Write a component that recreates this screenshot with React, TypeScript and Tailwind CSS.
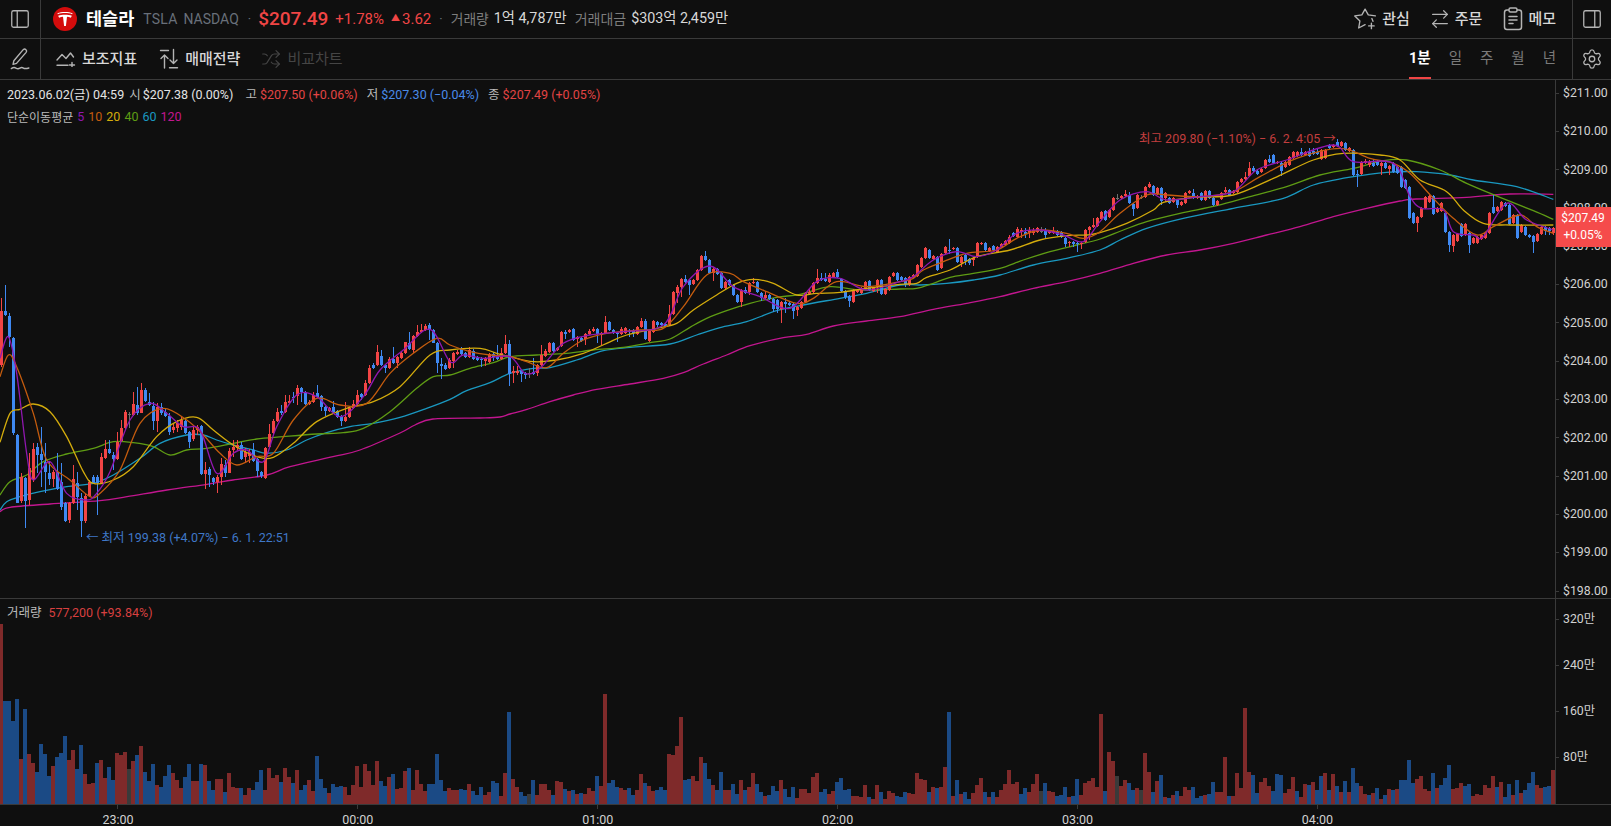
import { ArrowRightLeft, PanelLeft, PanelRight, Settings, Shuffle } from "lucide-react"

// candle rows, read off the chart: colour, body top, body bottom, wick top, wick bottom
const candleRows: [number, number, number, string][] = [
  [0, 280, 0, `r92,255,55,260 b92,104,15,108 b108,170,100,200 b175,460,170,465 b465,668,462,670 r592,663,578,670 b595,663,590,745 r565,660,520,675 r507,600,490,605 b500,525,490,580 b522,540,440,620 b545,577,490,640 b578,597,545,615 r577,597,570,620 b575,627,518,630 b606,682,550,690 b670,722,665,725 r670,720,665,730 r598,670,555,672 b610,652,575,690 b655,722,640,772 r648,722,640,728 r605,648,600,650 b592,610,585,612 b590,610,585,705 r532,610,518,612 r507,535,480,538 b507,520,480,523 b525,537,515,570 r485,537,455,540 r445,482,420,485 r395,445,390,450 g402,404,395,445 r373,405,335,408 b375,400,320,405 r330,398,308,400 b330,362,325,365 b365,375,340,378 b377,423,365,450 r380,423,370,455 b382,400,370,405 b395,408,385,411 b407,455,400,465 r440,450,432,460 r430,445,420,455 r420,440,412,450 b422,460,418,462 b455,485,452,505 r450,478,442,482 r440,450,435,465 b438,582,435,585 r570,582,545,628 b567,585,562,620 b595,607,590,615 r590,607,585,640 r552,590,535,615 b555,578,540,590 r513,578,505,580 r500,510,480,530 r495,505,480,510 b495,538,485,540 r515,530,505,550 r515,527,508,550 b510,542,490,545 b538,572,535,590 b575,587,572,595 r505,595,502,598 r462,502,433,504 r422,460,418,462 r396,422,385,425 b393,400,375,404 r367,395,345,398 r362,370,345,373 b350,354,335,370 r325,348,315,375 b325,335,320,365 b335,372,332,375 r365,372,360,375 r345,365,335,368 b340,350,315,353 b347,380,345,392 b380,392,378,408 r385,392,380,395 b380,395,362,398 b393,410,390,413 b410,423,405,438 r412,423,365,426 r385,412,378,415 r373,385,360,388 r345,373,330,376 b342,350,338,360 r308,345,300,348 r265,310,255,313 b255,265,250,268 r215,255,195,258 b228,255,210,258 b255,265,252,278 r238,265,232,268 b237,250,200,252 r232,250,228,265 r218,235,212,238 r187,218,185,222 b188,207,155,210 r168,210,165,220 r155,168,135,171 r150,157,133,160 r137,150,132,153 b135,150,130,180 b150,188,148,190 b188,250,186,280 b252,258,235,298 b255,268,250,270 r240,265,235,268`],
  [113, 240, 0, `r340,362,335,385 r337,342,330,345 b325,342,322,345 b340,352,336,355 r330,352,320,355 b332,358,328,361 b352,360,348,363 b358,361,350,382 r355,362,350,378 r343,365,340,368 b343,352,335,363 b350,358,315,361 r338,358,325,361 r312,338,285,341 b312,402,300,437 r393,399,378,430 r393,399,378,405 b393,402,390,425 b400,405,397,418 g400,402,385,415 b397,403,355,406 r376,398,372,408 r346,376,315,379 r333,348,328,351 r309,335,305,338 b309,332,306,335 r323,330,320,333 r276,318,272,321 b275,283,270,297 r270,277,266,280 b268,300,265,303 r292,298,288,322 b295,302,292,305 r282,297,278,315 r272,283,268,286 r266,273,262,276 b267,283,265,308 r278,284,275,315 r246,278,228,281 b246,270,243,273 b270,280,267,283 b280,283,277,305 r266,282,262,285 r265,280,262,283 b272,275,268,290 b272,278,268,290 r262,282,258,285 r242,262,235,265 b243,298,238,300 r274,302,270,305 r243,276,240,279 b245,255,242,262 b250,256,245,265 b252,258,248,262 r222,255,195,258 r155,223,152,226 r140,160,136,188 r117,140,113,172 b117,125,105,128 b120,136,117,165 r120,132,117,135 r90,120,87,123 r48,90,45,93 b48,60,33,63 b60,98,57,101 r87,100,84,122 b87,103,84,106 b100,145,97,148 r125,145,122,148 b120,135,117,138 b135,165,132,168 b165,185,162,188 r150,185,147,200 b150,158,140,161 r128,155,125,165 r125,130,115,133 b125,155,122,158 b158,173,155,182 r165,173,152,176 b165,178,162,181 b178,208,175,215 b180,207,177,220 r185,207,182,248 b185,192,175,220 b188,195,185,198 b192,212,189,237 r202,210,199,228 r185,205,182,208 r160,185,157,188 r155,162,148,165 r130,155,127,158 r113,130,88,133 b115,120,98,123 b118,123,98,126 r105,125,100,128 r100,112,97,115 b97,112,87,115 b118,152,115,155 b152,170,149,178 b168,182,165,200 r150,185,147,188 r150,155,147,158 r145,158,142,161 r127,145,124,148 b122,150,119,153 r143,152,140,155 r120,142,117,160 b120,163,117,166 r148,162,145,165 r110,150,107,153 r100,107,97,110 b100,120,97,123`],
  [225, 170, 0, `b320,330,317,333 b323,342,320,352 r320,345,317,348 r315,322,312,325 r285,318,282,321 r265,290,262,293 r233,265,230,268 b240,265,237,268 r257,268,254,271 b262,300,259,303 r252,295,249,298 r232,250,229,253 b240,243,208,252 r233,238,230,241 b233,275,230,278 r260,278,257,290 b255,272,252,285 b267,278,264,285 r265,270,262,288 r220,262,217,265 r220,223,217,226 b220,240,217,243 r235,243,232,246 b228,240,225,243 r232,245,229,250 r222,232,219,235 r212,225,209,228 r200,220,195,223 b190,197,187,200 r178,200,170,203 r180,186,175,205 b185,192,175,205 r180,188,172,203 r180,188,175,195 r175,185,172,188 g183,185,172,190 b182,195,175,207 r183,190,180,193 r183,190,172,193 b185,195,180,198 b187,200,184,203 b205,222,202,230 r215,220,212,230 b215,222,212,230 b218,222,215,245 r218,222,215,238 r180,215,177,218 r172,180,169,210 r165,170,145,173 r145,168,142,171 r125,147,122,150 b123,150,120,153 r120,140,117,143 r83,120,80,123 g85,87,72,90 r78,85,75,88 r72,78,60,81 b75,100,65,103 b102,118,99,137 r75,115,72,118 g80,82,75,88 r50,80,47,83 r42,50,37,53 b48,75,45,78 r55,72,52,75 b55,92,52,105 r70,85,67,95 b85,100,82,103 r85,97,82,100 b90,105,87,115 r97,105,94,108 r70,100,67,103 r62,68,59,71 b70,85,57,88 r78,85,75,88 b70,90,67,93 r62,90,59,93 b62,85,59,88 b85,105,82,108 r92,105,89,108 r68,88,65,91 r60,65,52,68 b60,75,57,78 r62,70,59,73 r35,65,32,68 r28,35,25,38 r20,27,5,30`],
  [312, 120, 0, `r143,168,125,171 b143,153,138,156 b153,163,150,166 r147,157,144,160 r120,145,117,148 b118,125,105,128 b105,130,102,133 r125,130,122,133 b128,152,125,168 r125,140,122,143 r112,135,109,138 r97,115,94,118 r97,107,94,110 b95,105,85,108 r95,105,92,108 b97,107,85,110 b92,103,85,106 b95,103,85,106 r90,118,87,121 r90,115,87,118 b75,85,72,88 r75,80,72,83 b65,78,58,81 r65,77,62,80 b70,90,67,93 r85,92,82,95 b90,165,87,168 b162,165,150,200 r125,162,122,165 r122,130,117,133 r125,135,120,140 b130,138,118,141 b123,135,120,138 r130,137,127,165 b130,145,127,148 r137,148,134,165 b130,155,127,158 b140,160,137,163 b142,200,139,203 b180,205,177,208 b200,295,197,298 b280,308,277,311 r290,310,287,335 r265,290,262,293 r230,265,227,268 r228,245,225,248 b228,283,225,286 r265,275,262,278 r250,272,247,275 b278,335,275,338 b335,375,332,395 r345,378,342,395 r342,362,339,365 b312,348,309,351 r312,345,309,348 b340,375,337,400 r355,370,352,373 r350,370,347,373 r345,357,342,360 r340,355,337,358 r280,340,277,343 b262,278,226,281 r260,272,257,275 r245,270,242,273 b250,258,247,261 b255,313,252,316 r285,310,282,313 b285,355,282,358 r315,335,312,338 b320,345,317,348 b345,350,342,353 b348,365,345,400 r342,362,339,365 r320,342,317,345 b322,332,319,345 b325,333,322,345 r325,340,322,345`],
]

const candleFill: Record<string, string> = { r: "#f24545", b: "#3f89f2", g: "#6f6f6f" }

type Candle = { i: number; c: string; top: number; bot: number; wt: number; wb: number }

const candles: Candle[] = candleRows.flatMap(([start, oy, , text]) =>
  text.split(" ").map((tok, k) => {
    const [a, b, wt, wb] = tok.slice(1).split(",").map(Number)
    return {
      i: start + k,
      c: tok[0],
      top: oy + a / 3,
      bot: oy + b / 3,
      wt: oy + (wt || a - 6) / 3,
      wb: oy + (wb || b + 6) / 3,
    }
  }),
)

const seg = (ox: number, oy: number, text: string, maxX = 9999) =>
  text
    .split(" ")
    .map((p) => p.split(",").map(Number))
    .map(([x, y]) => [ox + x / 3, oy + y / 3])
    .filter(([x]) => x < maxX)

const smooth = (pts: number[][]) => {
  let d = `M${pts[0][0]} ${pts[0][1]}`
  for (let i = 0; i < pts.length - 1; i++) {
    const p0 = pts[Math.max(i - 1, 0)]
    const p1 = pts[i]
    const p2 = pts[i + 1]
    const p3 = pts[Math.min(i + 2, pts.length - 1)]
    const c1x = p1[0] + (p2[0] - p0[0]) / 6
    const c1y = p1[1] + (p2[1] - p0[1]) / 6
    const c2x = p2[0] - (p3[0] - p1[0]) / 6
    const c2y = p2[1] - (p3[1] - p1[1]) / 6
    d += ` C${c1x} ${c1y} ${c2x} ${c2y} ${p2[0]} ${p2[1]}`
  }
  return d
}

const averages = [
  {
    color: "#c2168f",
    pts: [
      [0, 511.7], [10, 507.3], [50, 504], [100, 500.7], [127, 496.7], [167, 490], [207, 484.3], [233, 480], [267, 475], [290, 466.7], [333, 456.7], [360, 450], [400, 433], [415, 425], [433, 419], [480, 418], [500, 417], [510, 414], [527, 409.3],
      ...seg(450, 240, "300,485 370,465 440,448 540,432 640,415 700,398 760,372 830,345 900,317 1000,293 1070,283 1150,258 1250,243 1350,230"),
      ...seg(900, 170, "100,418 200,400 300,380 400,355 500,335", 1100),
      ...seg(1100, 120, "0,460 100,430 200,405 300,390 400,370 500,345 600,320 700,290 800,265 900,243 950,237 1100,232 1230,222 1360,223"),
    ],
  },
  {
    color: "#1a98c0",
    pts: [
      ...seg(0, 280, "0,690 20,665 60,650 120,635 200,620 280,610 340,585 420,535 480,490 560,465 610,465 650,480 700,495 760,510 800,520 860,510 920,480 980,458 1050,440 1120,430 1200,412 1280,385"),
      ...seg(450, 240, "0,478 50,452 120,428 180,400 250,385 300,383 380,360 460,332 540,322 660,312 740,285 810,263 890,245 980,212 1060,195 1170,175 1250,160"),
      ...seg(900, 170, "0,345 60,345 140,340 220,330 300,315 400,285 500,265", 1100),
      ...seg(1100, 120, "0,390 60,360 140,325 250,295 400,265 550,235 640,195 760,170 860,157 950,155 1050,165 1120,180 1250,200 1360,238"),
    ],
  },
  {
    color: "#5f9c14",
    pts: [
      ...seg(0, 280, "0,645 30,605 80,585 130,545 200,522 280,505 340,485 400,488 460,500 510,525 560,510 620,505 700,490 770,477 850,470 950,462 1030,458 1090,445 1170,395 1250,325 1300,290"),
      ...seg(450, 240, "0,405 60,385 130,368 180,350 260,345 350,340 430,330 520,322 600,308 660,297 720,262 770,235 830,212 900,190 980,172 1050,163 1140,140 1230,150"),
      ...seg(900, 170, "0,357 50,355 100,340 150,322 220,310 300,295 370,270 450,245 530,225", 1100),
      ...seg(1100, 120, "0,357 70,330 140,305 240,280 350,257 450,230 560,200 660,165 760,145 850,122 920,120 1020,150 1100,190 1200,232 1300,272 1360,298"),
    ],
  },
  {
    color: "#d4ac0c",
    pts: [
      ...seg(0, 280, "0,487 30,400 60,388 100,372 150,395 200,470 250,575 280,610 340,600 400,560 470,470 530,425 590,412 640,450 700,495 770,530 820,532 880,490 950,425 1040,385 1120,365 1200,320 1290,225"),
      ...seg(450, 240, "0,330 90,325 140,340 180,350 250,365 320,360 400,340 470,310 530,285 620,265 680,250 730,210 800,165 860,130 910,118 970,130 1040,165 1100,160 1170,157 1250,145"),
      ...seg(900, 170, "0,343 50,340 80,322 150,300 230,260 330,240 420,210 500,197 560,195", 1100),
      ...seg(1100, 120, "0,338 80,310 160,270 190,247 280,232 400,225 520,175 640,120 730,100 840,105 900,120 960,180 1040,215 1090,270 1150,310 1230,315 1360,315"),
    ],
  },
  {
    color: "#c45c0e",
    pts: [
      ...seg(0, 280, "0,290 25,225 50,260 100,400 140,540 210,600 270,650 300,640 360,570 420,430 490,385 560,420 610,465 660,520 710,555 770,530 820,520 880,420 950,355 1020,375 1100,370 1170,280 1240,220 1310,175"),
      ...seg(450, 240, "0,315 60,335 120,345 180,350 230,365 290,383 340,340 400,300 470,280 570,270 640,265 700,200 770,105 840,100 880,125 950,155 1040,190 1090,175 1160,125 1250,140"),
      ...seg(900, 170, "0,335 40,325 70,300 130,275 200,250 290,240 350,205 420,180 500,190 550,205", 1100),
      ...seg(1100, 120, "0,335 60,280 140,225 200,225 300,230 400,215 480,170 590,115 720,85 810,115 880,130 930,160 1000,235 1060,295 1130,345 1180,320 1260,285 1310,320 1360,340"),
    ],
  },
  {
    color: "#9017b0",
    pts: [
      ...seg(0, 280, "0,235 25,170 50,280 80,520 100,600 150,545 200,640 260,660 290,640 330,575 390,420 450,370 500,400 550,440 600,450 650,580 700,520 740,510 790,545 830,440 890,345 950,350 1020,410 1090,350 1140,270 1210,210 1290,148"),
      ...seg(450, 240, "0,365 40,345 100,355 180,350 225,400 270,385 340,310 420,285 520,275 640,255 700,140 780,78 850,140 930,170 1020,205 1100,125 1170,115 1250,150"),
      ...seg(900, 170, "0,335 40,320 100,270 170,245 230,260 290,240 350,190 420,180 490,195 550,215", 1100),
      ...seg(1100, 120, "0,305 60,240 140,215 200,240 300,230 400,215 470,150 560,120 700,75 760,125 880,130 930,230 965,265 1030,270 1060,335 1120,345 1150,350 1220,250 1280,300 1360,330"),
    ],
  },
]

// volume bars: colour and top of the bar, in 3x crop units above the pane's base line
const volA = "r100 b330 b330 b390 b325 r505 b355 r490 r517 b545 b460 b490 b555 r527 b500 b487 b436 r508 r478 b535 b463 r550 r580 r577 b517 r508 r562 b529 b568 r487 r493 r484 g535 r511 b493 r466 b544 b571 b520 r583 b590 b556 b523 r547 r568 r592 b559 b520 r571 r571 b520 r523 b571 b598 r565 r565 b604 r547 r589 r592 b592 r613 r592 b598 b574 b538 r598 r532 r562 r553 b574 r532 r559 b577 r538 b598 b583 r568 r601 b496 b565 b592 r607 b580 b589 b586 r589 r613 r583 r526 r589 r520 r541 r583 r511 b571 b586 r559 b550 r595 r592 r541 b532 r598 r538 r580 r601 b580 b580 b490 b568 b601 r592 r598 r598 b595 b598 r580 b601 b613 b589 r613 r604 b571 b577"
const volB = "r407 r337 b154 r355 r380 b394 b406 g400 b358 r404 r370 r370 r388 b404 r361 r364 b385 r392 b388 r400 b398 r401 r382 r392 b346 r376 r100 b367 b358 b380 r382 r388 b382 b404 r388 r340 b367 r376 r392 b388 b379 b388 r280 r283 r257 r169 b358 b355 r346 r361 r289 b307 b355 r373 b388 b334 r388 r388 b370 b400 r358 b388 r379 r337 b370 b394 r406 b404 b376 b391 r358 b385 b409 b379 r412 r385 r385 r397 r349 r337 b394 b385 r400 r391 b364 b352 b388 b385 r406 r406 r409 r373 b409 r415 r373 b394 r415 r391 r397 b406 b409 b394 r397 r400 r337 r355 r358 b394 r379 b382 r379 r319 b154 r406 b358 r400 b394 b415 r397 r373 r352 b394 r409 b394 r409 r388 r370 r328 r370 r364 b400 b382 r394 r370 r340 g391 b367 r391 r394 b406 b404 b379 r409 b406 b355 r403 r367 r361 r352 r379 r160 b391 r274 r301 g346 r376 r358 b367 b388 r382 g388 r277 r334 b394 r361 b343 r409 b412 r403 b391 r406 r379 r388 b379 b412 b406 r403 b400 b364 r394 r394 r289 b406 r406 r337 r382 r142 r334 b343 b397 r364 r352 r376 b391 b340 b343 r397 r385 r349 b391 r409 r370 b373 r364 b388 b346 r337 b388 r340 b376 r394 b361 r394 b322 b367 r376 r400 b403 r397 b382 r415 b403 r385 b388 r385 b358 b358 b298 b367 r355 r346 r385 r391 b337 r382 b373 b352 b313 r385 r382 r367 b376 b370 r406 r400 r403 r373 r382 r346 b379 r364 b409 b370 r403 b358 r397 b388 b367 b334 r373 r382 b379 b376 r328"

const volFill: Record<string, string> = { r: "#7f2a2a", b: "#1b4a85", g: "#3a3a3a" }

const volumes = [
  ...volA.split(" ").map((t) => ({ c: t[0], h: (640 - Number(t.slice(1))) / 3 })),
  ...volB.split(" ").map((t) => ({ c: t[0], h: (430 - Number(t.slice(1))) / 3 })),
]

const priceTicks = ["$211.00", "$210.00", "$209.00", "$208.00", "$207.00", "$206.00", "$205.00", "$204.00", "$203.00", "$202.00", "$201.00", "$200.00", "$199.00", "$198.00"]
const volumeTicks = ["320만", "240만", "160만", "80만"]
const timeTicks = ["23:00", "00:00", "01:00", "02:00", "03:00", "04:00"]

function PenIcon() {
  return (
    <svg width="22" height="24" viewBox="0 0 24 26" fill="none" stroke="#b4b4b4" strokeWidth="1.5" strokeLinejoin="round" strokeLinecap="round">
      <path d="M15.500 2.800a2.200 2.200 0 0 1 3.200 3L8.200 17.800l-3.800 1 .9-3.900z" />
      <path d="M2.500 23.500c2-1.400 3.400-1.600 5-.6s3 1 4.400.1 2.600-.9 3.800-.1 3 .7 6-.1" />
    </svg>
  )
}

function IndicatorIcon() {
  return (
    <svg width="20" height="16" viewBox="0 0 20 16" fill="none" stroke="#b4b4b4" strokeWidth="1.4" strokeLinecap="round" strokeLinejoin="round">
      <path d="M1 9l5-5.500 4 4L14.500 2l3 4" />
      <path d="M1 14.200h11" />
      <path d="M16 11.400v5M13.500 14h5" />
    </svg>
  )
}

function StrategyIcon() {
  return (
    <svg width="20" height="22" viewBox="0 0 20 22" fill="none" stroke="#b4b4b4" strokeWidth="1.4" strokeLinecap="round" strokeLinejoin="round">
      <path d="M1.500 2.500h8" />
      <path d="M5.500 7v13M2 10.500L5.500 7 9 10.500" />
      <path d="M14.500 1.500v14M11 12l3.500 3.500L18 12" />
      <path d="M10.500 19.800h8" />
    </svg>
  )
}

function StarPlusIcon() {
  return (
    <svg width="22" height="22" viewBox="0 0 24 24" fill="none" stroke="#b4b4b4" strokeWidth="1.5" strokeLinecap="round" strokeLinejoin="round">
      <path d="M14 18.200 6.800 22l1.400-8-5.800-5.600 8-1.200L14 0.800l3.600 6.400 8 1.200" transform="translate(-1.500 0.500) scale(0.97)" />
      <path d="M19.500 11.500l1.200 3" />
      <path d="M19 16.500v6M16 19.500h6" />
    </svg>
  )
}

function MemoIcon() {
  return (
    <svg width="20" height="24" viewBox="0 0 20 24" fill="none" stroke="#b4b4b4" strokeWidth="1.5" strokeLinecap="round" strokeLinejoin="round">
      <rect x="1.500" y="3" width="17" height="19.500" rx="2.500" />
      <rect x="6" y="1" width="8" height="4" rx="1.500" fill="#0f0f0f" />
      <path d="M6 9.500h8M6 13h8M6 16.500h4" />
    </svg>
  )
}

function TeslaLogo() {
  return (
    <svg width="24" height="24" viewBox="0 0 24 24">
      <circle cx="12" cy="12" r="12" fill="#d40c0c" />
      <path fill="#fff" d="M12 7.800c2.500 0 4.900.3 6.800 1-.3.900-.7 1.500-1.100 1.900-1-.5-2.300-.8-3.700-.9L12.900 19h-1.800l-1.100-9.200c-1.400.1-2.700.4-3.700.9-.4-.4-.8-1-1.100-1.900 1.900-.7 4.300-1 6.800-1z" />
      <path fill="#fff" d="M12 5c2.800 0 5.500.4 7.600 1.200l-.4 1c-2.200-.8-4.600-1.100-7.200-1.100s-5 .3-7.200 1.100l-.4-1C6.500 5.400 9.200 5 12 5z" />
    </svg>
  )
}

function PriceChart() {
  return (
    <svg className="absolute inset-0 h-full w-full" viewBox="0 80 1555 518" preserveAspectRatio="none">
      {averages.slice(0, 3).map((m) => (
        <path key={m.color} d={smooth(m.pts)} fill="none" stroke={m.color} strokeWidth="1.3" />
      ))}
      {candles.map((k) => (
        <g key={k.i} fill={candleFill[k.c]} shapeRendering="crispEdges">
          <rect x={4 * k.i + 1} y={k.wt} width="1" height={k.wb - k.wt} />
          <rect x={4 * k.i} y={k.top} width="3" height={Math.max(k.bot - k.top, 1)} />
        </g>
      ))}
      {averages.slice(3).map((m) => (
        <path key={m.color} d={smooth(m.pts)} fill="none" stroke={m.color} strokeWidth="1.3" />
      ))}
    </svg>
  )
}

function VolumeChart() {
  return (
    <svg className="absolute inset-0 h-full w-full" viewBox="0 0 1555 205" preserveAspectRatio="none">
      {volumes.map((v, i) => (
        <rect key={i} x={4 * i - 1} y={205 - v.h} width="4" height={v.h} fill={volFill[v.c]} shapeRendering="crispEdges" />
      ))}
    </svg>
  )
}

export default function App() {
  return (
    <div className="flex h-[826px] w-[1611px] flex-col overflow-hidden bg-[#0f0f0f] font-['Roboto','Noto_Sans_CJK_KR',sans-serif] text-[13px] text-[#cfcfcf]">
      {/* top bar */}
      <div className="flex h-[39px] shrink-0 items-center border-b border-[#3a3a3a]">
        <div className="flex h-full w-[41px] items-center justify-center border-r border-[#3a3a3a]">
          <PanelLeft size={22} strokeWidth={1.4} color="#b4b4b4" />
        </div>
        <div className="ml-[12px] shrink-0">
          <TeslaLogo />
        </div>
        <span className="ml-[9px] text-[17.500px] font-bold text-white">테슬라</span>
        <span className="ml-[9px] text-[14px] tracking-[0.2px] text-[#69707a]">TSLA</span>
        <span className="ml-[6px] text-[14px] text-[#69707a]">NASDAQ</span>
        <span className="ml-[9px] text-[#69707a]">·</span>
        <span className="ml-[7px] text-[19px] font-medium text-[#f04545]">$207.49</span>
        <span className="ml-[7px] text-[15px] text-[#f04545]">+1.78%</span>
        <span className="ml-[7px] text-[9px] text-[#f04545]">▲</span>
        <span className="ml-[2px] text-[15px] text-[#f04545]">3.62</span>
        <span className="ml-[8px] text-[#69707a]">·</span>
        <span className="ml-[8px] text-[13.800px] text-[#7d7d7d]">거래량</span>
        <span className="ml-[5px] text-[14.300px] text-[#d8d8d8]">1억 4,787만</span>
        <span className="ml-[8px] text-[14px] text-[#7d7d7d]">거래대금</span>
        <span className="ml-[5px] text-[14.300px] text-[#d8d8d8]">$303억 2,459만</span>

        <div className="ml-auto flex items-center text-[15px] font-medium text-[#d8d8d8]">
          <StarPlusIcon />
          <span className="ml-[6px]">관심</span>
          <ArrowRightLeft size={22} strokeWidth={1.4} color="#b4b4b4" className="ml-[19px]" />
          <span className="ml-[4px]">주문</span>
          <div className="ml-[21px]">
            <MemoIcon />
          </div>
          <span className="ml-[5px]">메모</span>
        </div>
        <div className="ml-[16px] flex h-full w-[39px] items-center justify-center border-l border-[#3a3a3a]">
          <PanelRight size={22} strokeWidth={1.4} color="#b4b4b4" />
        </div>
      </div>

      {/* tool bar */}
      <div className="flex h-[41px] shrink-0 items-center border-b border-[#3a3a3a]">
        <div className="flex h-full w-[41px] items-center justify-center border-r border-[#3a3a3a]">
          <PenIcon />
        </div>
        <div className="ml-[15px]">
          <IndicatorIcon />
        </div>
        <span className="ml-[6px] text-[15px] font-medium text-[#d8d8d8]">보조지표</span>
        <div className="ml-[22px]">
          <StrategyIcon />
        </div>
        <span className="ml-[6px] text-[15px] font-medium text-[#d8d8d8]">매매전략</span>
        <Shuffle size={20} strokeWidth={1.4} color="#444444" className="ml-[21px]" />
        <span className="ml-[6px] text-[15px] text-[#454545]">비교차트</span>

        <div className="ml-auto flex h-full items-center text-[14.500px] text-[#7a7a7a]">
          <div className="relative flex h-full items-center font-bold text-white">
            1분
            <div className="absolute bottom-0 left-0 right-0 h-[2px] bg-[#f04545]" />
          </div>
          <span className="ml-[18px]">일</span>
          <span className="ml-[18px]">주</span>
          <span className="ml-[18px]">월</span>
          <span className="ml-[18px]">년</span>
        </div>
        <div className="ml-[16px] flex h-full w-[39px] items-center justify-center border-l border-[#3a3a3a]">
          <Settings size={22} strokeWidth={1.4} color="#b4b4b4" />
        </div>
      </div>

      {/* price pane */}
      <div className="flex h-[519px] shrink-0 border-b border-[#3a3a3a]">
        <div className="relative w-[1555px] shrink-0 overflow-hidden">
          <PriceChart />
          <div className="absolute left-[7px] top-[7px] flex h-[17px] items-center whitespace-nowrap text-[12.500px]">
            <span className="text-[#e4e4e4]">2023.06.02(금) 04:59</span>
            <span className="ml-[5px] text-[#bbbbbb]">시</span>
            <span className="ml-[2px] text-[#e4e4e4]">$207.38 (0.00%)</span>
            <span className="ml-[12px] text-[#bbbbbb]">고</span>
            <span className="ml-[3px] text-[#e24444]">$207.50 (+0.06%)</span>
            <span className="ml-[9px] text-[#bbbbbb]">저</span>
            <span className="ml-[3px] text-[#4a8ae8]">$207.30 (−0.04%)</span>
            <span className="ml-[9px] text-[#bbbbbb]">종</span>
            <span className="ml-[3px] text-[#e24444]">$207.49 (+0.05%)</span>
          </div>
          <div className="absolute left-[7px] top-[29px] flex h-[17px] items-center gap-[4px] whitespace-nowrap text-[12.500px]">
            <span className="text-[12px] text-[#bbbbbb]">단순이동평균</span>
            <span className="text-[#9017b0]">5</span>
            <span className="text-[#c45c0e]">10</span>
            <span className="text-[#d4ac0c]">20</span>
            <span className="text-[#5f9c14]">40</span>
            <span className="text-[#1a98c0]">60</span>
            <span className="text-[#c2168f]">120</span>
          </div>
          <div className="absolute left-[1139px] top-[50px] whitespace-nowrap text-[12.500px] text-[#c23e3e]">
            최고 209.80 (−1.10%) − 6. 2. 4:05 →
          </div>
          <div className="absolute left-[86px] top-[449px] whitespace-nowrap text-[12.500px] text-[#3f78c8]">
            ← 최저 199.38 (+4.07%) − 6. 1. 22:51
          </div>
        </div>
        <div className="relative w-[56px] shrink-0 overflow-hidden border-l border-[#3a3a3a] text-[12.300px] text-[#d2d2d2]">
          <div className="-mt-[6px] flex flex-col">
            {priceTicks.map((t) => (
              <div key={t} className="flex h-[38.300px] shrink-0 items-center">
                <div className="h-px w-[3px] bg-[#3a3a3a]" />
                <span className="ml-[4px]">{t}</span>
              </div>
            ))}
          </div>
          <div className="absolute -left-px right-0 top-[127px] flex h-[40px] flex-col items-center justify-center bg-[#f54b4b] text-[12px] leading-[17px] text-white">
            <span>$207.49</span>
            <span>+0.05%</span>
          </div>
        </div>
      </div>

      {/* volume pane */}
      <div className="flex h-[206px] shrink-0 border-b border-[#3a3a3a]">
        <div className="relative w-[1555px] shrink-0 overflow-hidden">
          <VolumeChart />
          <div className="absolute left-[7px] top-[6px] flex h-[17px] items-center whitespace-nowrap text-[12.500px]">
            <span className="text-[#bbbbbb]">거래량</span>
            <span className="ml-[7px] text-[#d84040]">577,200 (+93.84%)</span>
          </div>
        </div>
        <div className="w-[56px] shrink-0 overflow-hidden border-l border-[#3a3a3a] text-[12.300px] text-[#d2d2d2]">
          <div className="-mt-[3px] flex flex-col">
            {volumeTicks.map((t) => (
              <div key={t} className="flex h-[46px] shrink-0 items-center">
                <div className="h-px w-[3px] bg-[#3a3a3a]" />
                <span className="ml-[4px]">{t}</span>
              </div>
            ))}
          </div>
        </div>
      </div>

      {/* time axis */}
      <div className="-ml-[2px] flex flex-1 text-[12.500px] text-[#d2d2d2]">
        {timeTicks.map((t) => (
          <div key={t} className="flex w-[239.900px] shrink-0 flex-col items-center">
            <div className="h-[4px] w-px bg-[#3a3a3a]" />
            <span className="mt-[2px]">{t}</span>
          </div>
        ))}
      </div>
    </div>
  )
}
